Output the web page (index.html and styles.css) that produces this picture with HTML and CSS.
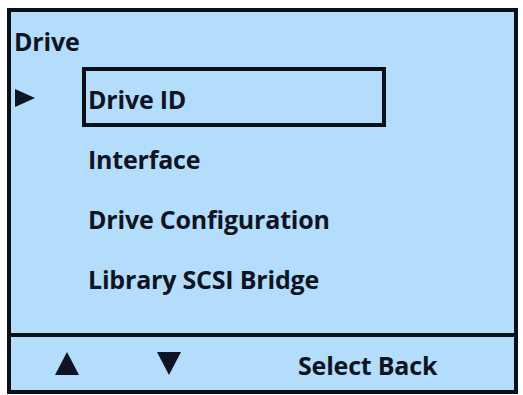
FILE: index.html
```html
<!DOCTYPE html>
<html>
<head>
<meta charset="utf-8">
<link rel="stylesheet" href="styles.css">
</head>
<body>
<div class="screen">
  <div class="main">
    <div class="title">Drive</div>
    <div class="menu">
      <div class="row">
        <svg class="pointer" width="20" height="18" viewBox="0 0 20 18"><polygon points="0,0 20,9 0,18" fill="#0e1422"/></svg>
        <div class="item selected">Drive ID</div>
      </div>
      <div class="row"><span></span><div class="item">Interface</div></div>
      <div class="row"><span></span><div class="item">Drive Configuration</div></div>
      <div class="row"><span></span><div class="item">Library SCSI Bridge</div></div>
    </div>
  </div>
  <div class="footer">
    <svg class="tri up" width="24" height="23" viewBox="0 0 24 23"><polygon points="12,0 24,23 0,23" fill="#0e1422"/></svg>
    <svg class="tri down" width="24" height="23" viewBox="0 0 24 23"><polygon points="0,0 24,0 12,23" fill="#0e1422"/></svg>
    <div class="keys">Select Back</div>
  </div>
</div>
</body>
</html>
```

FILE: styles.css
```css
html, body {
  margin: 0;
  padding: 0;
  background: #ffffff;
}
body {
  font-family: "Open Sans", "Lato", sans-serif;
  font-weight: 700;
  color: #0e1422;
}
.screen {
  box-sizing: border-box;
  margin: 8px 0 0 7px;
  width: 511px;
  height: 386px;
  border: 4px solid #0b0f1a;
  background: #b4dcfb;
  display: flex;
  flex-direction: column;
}
.main {
  flex: 1;
  padding: 0 0 0 4px;
}
.title {
  font-size: 25px;
  line-height: 24px;
  margin-top: 17px;
  margin-left: -1px;
  height: 38px;
  letter-spacing: -0.2px;
}
.menu {
  display: flex;
  flex-direction: column;
}
.row {
  display: grid;
  grid-template-columns: 67px 304px;
  align-items: center;
  height: 60px;
}
.pointer {
  margin-top: 2px;
}
.item {
  box-sizing: border-box;
  font-size: 25px;
  height: 60px;
  line-height: 56px;
  padding: 4px 0 0 2px;
  border: 4px solid transparent;
  letter-spacing: -0.2px;
  white-space: nowrap;
}
.item.selected {
  border-color: #0b0f1a;
  line-height: 50px;
  padding-top: 3px;
}
.row:nth-child(n+2) .item {
  border: 0;
  padding-left: 6px;
}
.footer {
  height: 53px;
  border-top: 4px solid #0b0f1a;
  display: flex;
  align-items: center;
}
.tri.up {
  margin-left: 44px;
}
.tri.down {
  margin-left: 78px;
}
.keys {
  margin-left: 117px;
  font-size: 25px;
  padding-top: 2px;
  letter-spacing: -0.2px;
}
```
